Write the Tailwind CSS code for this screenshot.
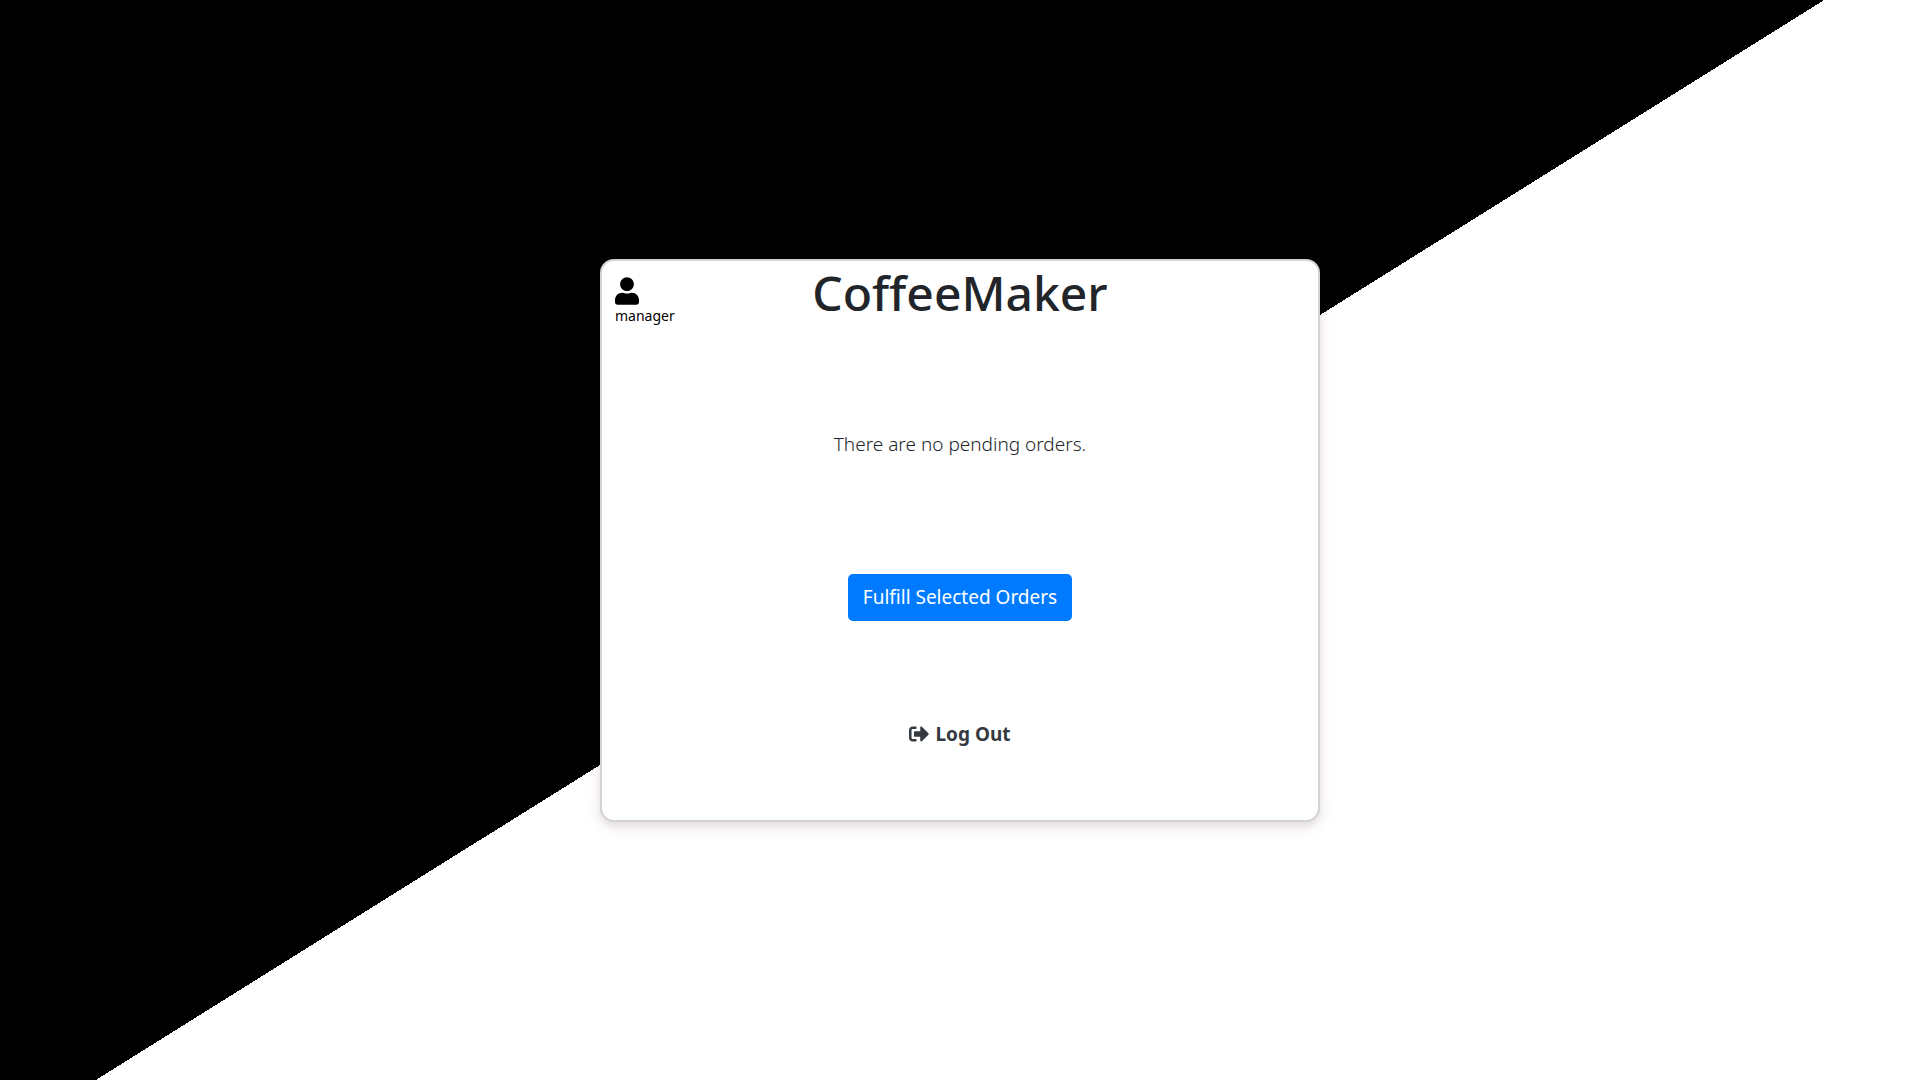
<!DOCTYPE html>
<html lang="en">
<head>
<meta charset="utf-8">
<meta name="viewport" content="width=device-width, initial-scale=1">
<title>CoffeeMaker</title>
<script src="https://cdn.jsdelivr.net/npm/@tailwindcss/browser@4"></script>
</head>
<body class="flex min-h-screen items-center justify-center bg-[linear-gradient(148deg,#000_50%,#fff_50%)] font-['Noto_Sans',sans-serif] text-[#212529]">
<main class="relative flex w-full max-w-[720px] flex-col items-center rounded-[14px] border-2 border-[#d3d3d3] bg-white pb-[70px] shadow-[0_4px_8px_0_rgba(80,23,23,0.1),0_6px_20px_0_rgba(80,23,23,0.06)]">
  <div class="absolute top-4 left-[13px] flex flex-col items-start text-sm leading-[22px] text-black">
    <svg class="h-7 w-6" viewBox="0 0 448 512" fill="currentColor" aria-hidden="true"><path d="M224 256c70.700 0 128-57.300 128-128S294.700 0 224 0 96 57.300 96 128s57.300 128 128 128zm89.600 32h-16.700c-22.200 10.200-46.900 16-72.900 16s-50.600-5.800-72.900-16h-16.700C60.200 288 0 348.200 0 422.400V464c0 26.500 21.500 48 48 48h352c26.500 0 48-21.500 48-48v-41.600c0-74.200-60.200-134.400-134.400-134.400z"/></svg>
    <span>manager</span>
  </div>
  <h1 class="text-5xl leading-[64px] font-medium">CoffeeMaker</h1>
  <p class="mt-[103px] text-[19px] leading-8 font-light">There are no pending orders.</p>
  <button type="button" class="mt-[114px] h-[47px] rounded-[5px] bg-[#007bff] px-[15px] text-[19px] text-white">Fulfill Selected Orders</button>
  <a href="#" class="mt-[97px] flex items-center gap-[6px] text-[19px] leading-8 font-bold text-[#343a40]">
    <svg class="size-5" viewBox="0 0 512 512" fill="currentColor" aria-hidden="true"><path d="M497 273L329 441c-15 15-41 4.500-41-17v-96H152c-13.300 0-24-10.700-24-24v-96c0-13.300 10.700-24 24-24h136V88c0-21.400 25.900-32 41-17l168 168c9.300 9.400 9.300 24.600 0 34zM192 436v-40c0-6.600-5.400-12-12-12H96c-17.700 0-32-14.300-32-32V160c0-17.700 14.300-32 32-32h84c6.600 0 12-5.400 12-12V76c0-6.600-5.400-12-12-12H96c-53 0-96 43-96 96v192c0 53 43 96 96 96h84c6.600 0 12-5.400 12-12z"/></svg>
    Log Out
  </a>
</main>
</body>
</html>
